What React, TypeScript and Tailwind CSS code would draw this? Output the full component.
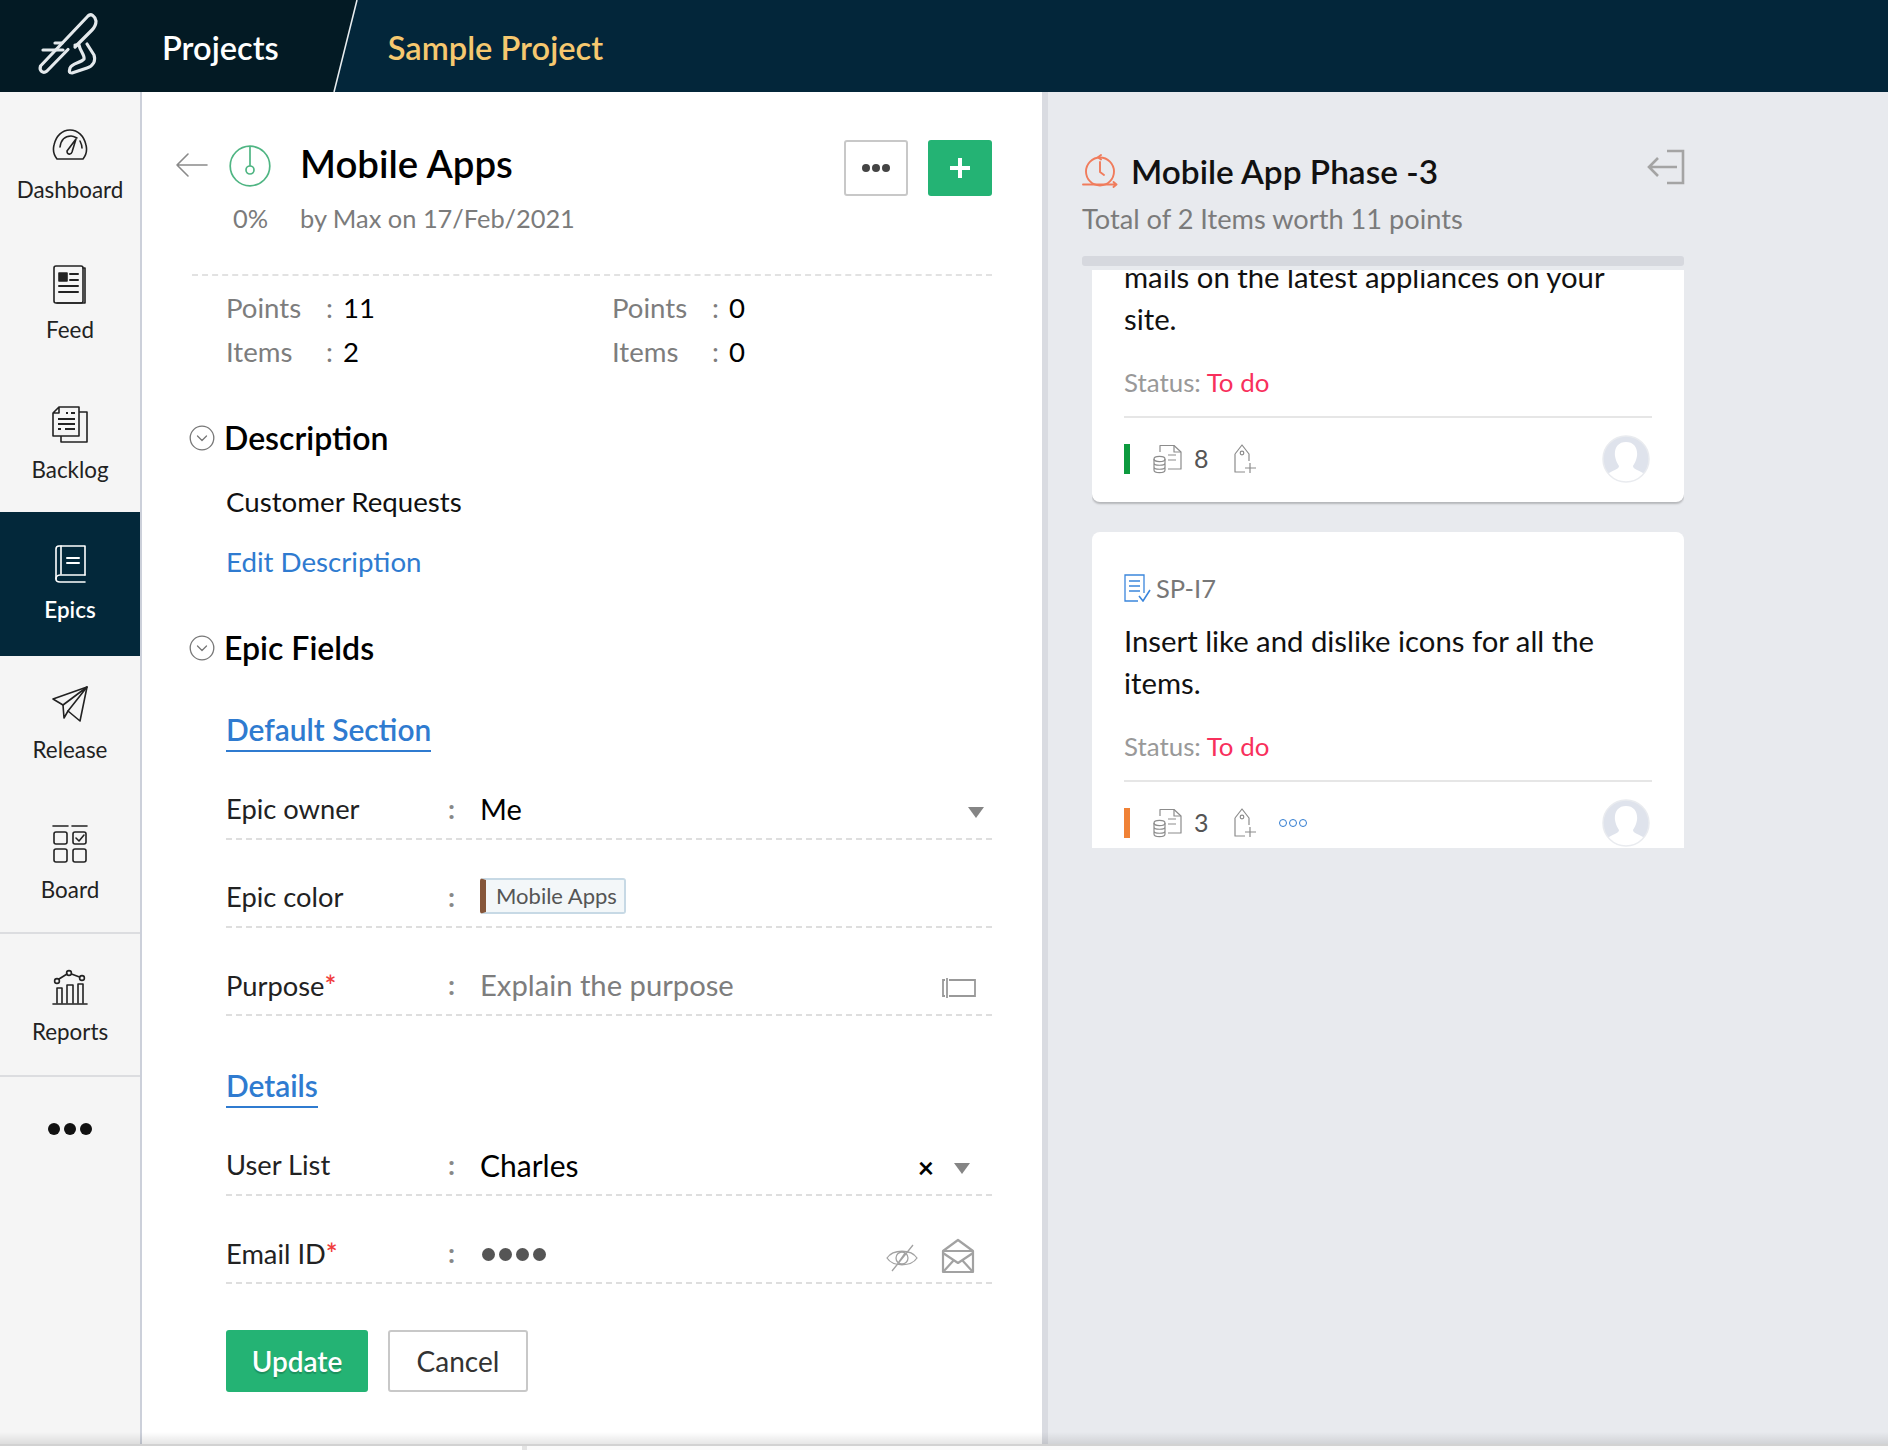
import React from "react";

const S = ({ w, h, vb, children, className = "" }: { w: number; h: number; vb: string; children: React.ReactNode; className?: string }) => (
  <svg width={w} height={h} viewBox={vb} fill="none" stroke="currentColor" strokeWidth={1.6} strokeLinecap="round" strokeLinejoin="round" className={className}>
    {children}
  </svg>
);

const Logo = () => (
  <svg width="90" height="80" viewBox="0 0 90 80" fill="none" stroke="#e4e9ec" strokeWidth="3.2" strokeLinejoin="round" strokeLinecap="round">
    <path d="M43 44.5 L22 66 C18 69 14 66 15.5 61 L63 11 C66 8 70 11 71 16 C71 20 69 23 67 25 L50 42" />
    <path d="M18 45 H38 M30 38 H37" />
    <path d="M50 40 H54 C55 46 60 50 59 54 C56 58 47 58 45 63 C44 67 44 68 47 68 L62 63 C68 61 71 56 69 50 L62 39" />
  </svg>
);

const Dashboard = () => (
  <S w={36} h={36} vb="0 0 36 36" className="text-[#222]">
    <path d="M5 31 C1 26 1 21 2 17 C4 8 10 2 18 2 C26 2 32 8 34 17 C35 21 35 26 31 31 Z" />
    <path d="M8 19 C9 12 13 8 19 8 C21 8 23 9 25 10" />
    <path d="M28 13 C29 15 30 17 30 20" />
    <path d="M24 11 L20 24 C19 27 15 27 15 23 Z" />
  </S>
);
const Feed = () => (
  <S w={34} h={40} vb="0 0 34 40" className="text-[#222]">
    <path d="M30 3 H32 V38 H4" />
    <rect x="1" y="1" width="29" height="37" rx="2" />
    <rect x="6" y="8" width="8" height="8" fill="currentColor" />
    <path d="M17 9 H25 M17 15 H25 M6 21 H25 M6 27 H25" strokeWidth="2" />
  </S>
);
const Backlog = () => (
  <svg width="36" height="37" viewBox="22 16 36 37" fill="none" stroke="#222" strokeWidth="1.6" strokeLinejoin="round">
    <path d="M29 17 H49 V46 H23 V23 Z M29 17 V23 H23" />
    <path d="M49 22 H57 V52 H31 V46" />
    <path d="M36 23 H38 M41 23 H45 M28 29 H45 M28 34 H45 M28 39 H31 M35 39 H45" strokeWidth="1.8" />
  </svg>
);
const Epics = () => (
  <S w={32} h={38} vb="0 0 32 38" className="text-white">
    <path d="M31 30 H6 C3 30 2 32 2 34 C2 36 3 37 6 37 H31" />
    <path d="M2 34 V4 C2 2 3 1 5 1 H31 V30" />
    <path d="M7 1 V29" />
    <path d="M13 13 H25 M13 18 H25" strokeWidth="2" />
  </S>
);
const Release = () => (
  <S w={36} h={36} vb="0 0 36 36" className="text-[#222]">
    <path d="M1 13 L35 1 L28 35 L16 25 L12 32 L11 19 Z" />
    <path d="M35 1 L11 19 M35 1 L16 25" />
  </S>
);
const Board = () => (
  <S w={36} h={38} vb="0 0 36 38" className="text-[#222]">
    <path d="M1 1 H16 M20 1 H35" />
    <rect x="2" y="7" width="13" height="12" rx="2" />
    <rect x="21" y="7" width="13" height="12" rx="2" />
    <rect x="2" y="24" width="13" height="13" rx="2" />
    <rect x="21" y="24" width="13" height="13" rx="2" />
    <path d="M24 13 L27 16 L32 10" />
  </S>
);
const Reports = () => (
  <S w={36} h={36} vb="0 0 36 36" className="text-[#222]">
    <path d="M1 35 H35" />
    <path d="M5 34 V19 H10 V34 M15 34 V16 H21 V34 M26 34 V15 H31 V34" />
    <circle cx="5" cy="12" r="2.4" />
    <circle cx="17" cy="4" r="2.4" />
    <circle cx="30" cy="9" r="2.4" />
    <path d="M7 10 L15 5 M19.5 5 L27.5 8" />
  </S>
);

const navItem = "flex flex-col items-center w-[140px] text-[22.4px] leading-[28px] text-[#222]";

const Sidebar = () => (
  <aside className="w-[142px] shrink-0 h-full bg-[#f5f5f5] border-r-2 border-[#ccd0da]">
    <div className={`${navItem} h-[140px] pt-[35px]`}>
      <div className="h-[38px] flex items-center"><Dashboard /></div>
      <span className="mt-[11px]">Dashboard</span>
    </div>
    <div className={`${navItem} h-[140px] pt-[33px]`}>
      <div className="h-[40px] flex items-center"><Feed /></div>
      <span className="mt-[11px]">Feed</span>
    </div>
    <div className={`${navItem} h-[140px] pt-[32px]`}>
      <div className="h-[40px] flex items-center"><Backlog /></div>
      <span className="mt-[12px]">Backlog</span>
    </div>
    <div className={`${navItem} h-[144px] pt-[32px] bg-[#03283a]`}>
      <div className="h-[40px] flex items-center"><Epics /></div>
      <span className="mt-[12px] font-semibold text-white">Epics</span>
    </div>
    <div className={`${navItem} h-[136px] pt-[29px]`}>
      <div className="h-[38px] flex items-center"><Release /></div>
      <span className="mt-[13px]">Release</span>
    </div>
    <div className={`${navItem} h-[142px] pt-[33px] border-b-2 border-[#dcdde0]`}>
      <div className="h-[38px] flex items-center"><Board /></div>
      <span className="mt-[13px]">Board</span>
    </div>
    <div className={`${navItem} h-[143px] pt-[34px] border-b-2 border-[#dcdde0]`}>
      <div className="h-[38px] flex items-center"><Reports /></div>
      <span className="mt-[12px]">Reports</span>
    </div>
    <div className="w-[140px] flex justify-center gap-[4px] pt-[46px]">
      <i className="w-[12px] h-[12px] rounded-full bg-[#111]" />
      <i className="w-[12px] h-[12px] rounded-full bg-[#111]" />
      <i className="w-[12px] h-[12px] rounded-full bg-[#111]" />
    </div>
  </aside>
);

const Chevron = () => (
  <svg width="26" height="26" viewBox="0 0 26 26" fill="none" stroke="#777" strokeWidth="1.3" strokeLinecap="round" strokeLinejoin="round">
    <circle cx="13" cy="13" r="11.8" />
    <path d="M8.5 11 L13 15.5 L17.5 11" />
  </svg>
);

const Caret = ({ className = "" }: { className?: string }) => (
  <svg width="16" height="11" viewBox="0 0 16 11" className={className}><path d="M0 0 H16 L8 11 Z" fill="#858585" /></svg>
);

const Row = ({ label, star, children }: { label: string; star?: boolean; children: React.ReactNode }) => (
  <div className="h-[88px] pt-[38px] border-b-2 border-dashed border-[#dedede] flex items-start text-[27.3px] leading-[38px]">
    <div className="w-[222px] shrink-0 text-[#222]">
      {label}
      {star && <span className="text-[#f03c3c] text-[28px] font-semibold">*</span>}
    </div>
    <div className="w-[32px] shrink-0 text-[#888] font-bold">:</div>
    <div className="flex-1 flex items-center h-[38px] relative">{children}</div>
  </div>
);

const SectionLink = ({ children }: { children: React.ReactNode }) => (
  <div className="inline-block h-[43px] leading-[40px] text-[29.9px] font-semibold text-[#2f7bd0] border-b-2 border-[#2f7bd0]">{children}</div>
);

const Main = () => (
  <main className="w-[900px] shrink-0 h-full bg-white pl-[33px] pr-[50px] pt-[48px]">
    <div className="flex items-start h-[56px] relative">
      <S w={34} h={26} vb="0 0 34 26" className="text-[#8a8a8a] mt-[12px]">
        <path d="M13 2 L2 13 L13 24 M2 13 H32" />
      </S>
      <svg width="42" height="42" viewBox="0 0 42 42" fill="none" stroke="#4fb583" strokeWidth="1.7" className="ml-[20px] mt-[5px]">
        <circle cx="21" cy="21" r="19.8" />
        <circle cx="21" cy="25" r="4" />
        <path d="M21 1 V21" />
      </svg>
      <h1 className="ml-[29px] text-[38.4px] leading-[46px] font-semibold text-black">Mobile Apps</h1>
      <div className="ml-auto flex gap-[20px]">
        <div className="w-[64px] h-[56px] rounded-[3px] border-2 border-[#c8c8c8] bg-white flex items-center justify-center gap-[2px]">
          <i className="w-[8px] h-[8px] rounded-full bg-[#444]" />
          <i className="w-[8px] h-[8px] rounded-full bg-[#444]" />
          <i className="w-[8px] h-[8px] rounded-full bg-[#444]" />
        </div>
        <div className="w-[64px] h-[56px] rounded-[3px] bg-[#24b374] flex items-center justify-center">
          <svg width="24" height="24" viewBox="0 0 24 24" stroke="#fff" strokeWidth="4"><path d="M12 2 V22 M2 12 H22" /></svg>
        </div>
      </div>
    </div>
    <div className="flex h-[44px] items-center text-[25.4px] text-[#7b7b7b]">
      <span className="w-[125px] pl-[58px]">0%</span>
      <span>by Max on 17/Feb/2021</span>
    </div>
    <div className="ml-[17px] mt-[34px] border-b-2 border-dashed border-[#e2e2e2]" />
    <div className="ml-[51px] mt-[10px] grid grid-cols-[386px_1fr] text-[27.6px] leading-[44px]">
      {[["Points", "11"], ["Points", "0"], ["Items", "2"], ["Items", "0"]].map(([k, v], i) => (
        <div key={i} className="flex">
          <span className="w-[100px] text-[#7d7d7d]">{k}</span>
          <span className="w-[17px] text-[#7d7d7d]">:</span>
          <span className="text-black">{v}</span>
        </div>
      ))}
    </div>
    <div className="flex items-center h-[40px] mt-[44px] ml-[14px] gap-[9px] text-[32px] font-semibold text-black">
      <Chevron />
      Description
    </div>
    <div className="ml-[51px] mt-[24px] h-[40px] leading-[40px] text-[27.7px] text-[#111]">Customer Requests</div>
    <div className="ml-[51px] mt-[20px] h-[40px] leading-[40px] text-[27.7px] text-[#2f7bd0]">Edit Description</div>
    <div className="flex items-center h-[40px] mt-[46px] ml-[14px] gap-[9px] text-[32px] font-semibold text-black">
      <Chevron />
      Epic Fields
    </div>
    <div className="ml-[51px]">
      <div className="mt-[41px]"><SectionLink>Default Section</SectionLink></div>
      <Row label="Epic owner">
        <span className="text-[29px] text-black">Me</span>
        <Caret className="absolute right-[8px] top-[17px]" />
      </Row>
      <Row label="Epic color">
        <div className="relative -top-[1px] flex items-center h-[36px] pl-[10px] pr-[7px] text-[22px] text-[#555] bg-[#f3f7f9] border-2 border-[#c7d9e5] rounded-[3px] border-l-[6px] border-l-[#85563a]">Mobile Apps</div>
      </Row>
      <Row label="Purpose" star>
        <span className="text-[29.2px] text-[#7d7d7d]">Explain the purpose</span>
        <svg width="34" height="22" viewBox="0 0 34 22" fill="none" stroke="#999" strokeWidth="1.8" className="absolute right-[16px] top-[11px]">
          <path d="M7 3 H33 V19 H7 M3 3 H1 V19 H3" />
          <path d="M5 1 V21" />
        </svg>
      </Row>
      <div className="mt-[49px]"><SectionLink>Details</SectionLink></div>
      <Row label="User List">
        <span className="text-[30px] text-black">Charles</span>
        <span className="absolute right-[58px] top-[2px] text-[28px] font-bold text-black">×</span>
        <Caret className="absolute right-[22px] top-[17px]" />
      </Row>
      <Row label="Email ID" star>
        <div className="flex gap-[4px] pl-[2px] relative top-[1px]">
          <i className="w-[13px] h-[13px] rounded-full bg-[#555]" />
          <i className="w-[13px] h-[13px] rounded-full bg-[#555]" />
          <i className="w-[13px] h-[13px] rounded-full bg-[#555]" />
          <i className="w-[13px] h-[13px] rounded-full bg-[#555]" />
        </div>
        <svg width="34" height="28" viewBox="0 0 34 28" fill="none" stroke="#a2a2a2" strokeWidth="1.3" className="absolute right-[73px] top-[10px]">
          <path d="M2 14 C8 5 26 5 32 14 C26 23 8 23 2 14 Z" />
          <circle cx="17" cy="14" r="6" />
          <path d="M28 1 L7 27 M20 9 L13 19" />
        </svg>
        <svg width="34" height="36" viewBox="0 0 34 36" fill="none" stroke="#a2a2a2" strokeWidth="2.2" strokeLinejoin="round" className="absolute right-[17px] top-[4px]">
          <path d="M2 13 L17 2 L32 13 V34 H2 Z" />
          <path d="M2 13 H32 M2 15 L17 25 L32 15 M2 34 L13 22 M32 34 L21 22" />
        </svg>
      </Row>
      <div className="mt-[46px] flex gap-[20px]">
        <div className="w-[142px] h-[62px] rounded-[3px] bg-[#24b374] text-white text-[28px] font-semibold flex items-center justify-center [text-shadow:0_2px_1px_rgba(0,0,0,0.2)]">Update</div>
        <div className="w-[140px] h-[62px] rounded-[3px] border-2 border-[#c8c8c8] bg-white text-[#333] text-[28px] flex items-center justify-center">Cancel</div>
      </div>
    </div>
  </main>
);

const FileDb = () => (
  <svg width="30" height="30" viewBox="0 0 30 30" fill="none" stroke="#8c8c8c" strokeWidth="1.2" strokeLinejoin="round">
    <path d="M7 8 V1.5 H21 L28 8 V25 H15" />
    <path d="M21 1.5 V8 H28 M15 11 H23 M15 16 H23" />
    <ellipse cx="6.5" cy="15" rx="5.5" ry="2.6" />
    <path d="M1 15 V26 C1 29.5 12 29.5 12 26 V15 M1 19 C1 22 12 22 12 19 M1 23 C1 26 12 26 12 23" />
  </svg>
);
const TagPlus = () => (
  <svg width="24" height="30" viewBox="0 0 24 30" fill="none" stroke="#8c8c8c" strokeWidth="1.2" strokeLinejoin="round">
    <path d="M2 10 L9 1 L16 10 V17 M2 10 V28 H12" />
    <circle cx="9" cy="9" r="1.8" />
    <path d="M17 19 V29 M12 24 H23" />
  </svg>
);
const Avatar = () => (
  <svg width="48" height="48" viewBox="0 0 48 48" className="ml-auto mr-[2px]">
    <defs>
      <clipPath id="av"><circle cx="24" cy="24" r="23" /></clipPath>
    </defs>
    <circle cx="24" cy="24" r="23" fill="#dfe3ec" />
    <g clipPath="url(#av)" fill="#fff">
      <path d="M24 7 C32 7 36 13 35 21 C34 27 32 29 31 31 C31 34 36 35 41 38 L46 48 H2 L7 38 C12 35 17 34 17 31 C16 29 14 27 13 21 C12 13 16 7 24 7 Z" />
    </g>
    <circle cx="24" cy="24" r="23" fill="none" stroke="#e9ebef" strokeWidth="1.5" />
  </svg>
);

const Footer = ({ bar, n, more }: { bar: string; n: string; more?: boolean }) => (
  <div className="flex items-center h-[48px] mt-[17px]">
    <i className={`w-[6px] h-[30px] ${bar}`} />
    <span className="ml-[23px]"><FileDb /></span>
    <span className="ml-[11px] w-[39px] text-[25px] text-[#555]">{n}</span>
    <TagPlus />
    {more && (
      <span className="ml-[22px] flex gap-[2px]">
        <i className="w-[8px] h-[8px] rounded-full border-[1.5px] border-[#2f7bd0]" />
        <i className="w-[8px] h-[8px] rounded-full border-[1.5px] border-[#2f7bd0]" />
        <i className="w-[8px] h-[8px] rounded-full border-[1.5px] border-[#2f7bd0]" />
      </span>
    )}
    <Avatar />
  </div>
);

const Status = () => (
  <div className="h-[40px] leading-[40px] text-[25.9px] text-[#999]">
    Status: <span className="text-[#f8305c]">To do</span>
  </div>
);

const Panel = () => (
  <section className="flex-1 h-full bg-[#e8eaee] border-l-[6px] border-[#d9dbe1] pl-[34px] pt-[57px]">
    <div className="w-[602px]">
      <div className="flex items-center h-[44px] relative">
        <svg width="36" height="34" viewBox="12 12 36 34" fill="none" stroke="#f07c5c" strokeWidth="1.9" strokeLinecap="round" strokeLinejoin="round">
          <circle cx="30" cy="29.5" r="14" />
          <path d="M30 20 V30 L34 33" />
          <path d="M13 42.5 H46 M43.5 40 L46.5 42.5 L43.5 45" />
          <path d="M31 13 L28 15.2 L31 17.5" />
        </svg>
        <h2 className="ml-[13px] text-[33.4px] font-semibold text-[#111]">Mobile App Phase -3</h2>
        <svg width="38" height="36" viewBox="0 0 38 36" fill="none" stroke="#a4a4a4" strokeWidth="2.6" className="absolute right-[-1px] top-[0px]">
          <path d="M20 2 H36 V34 H20 M30 18 H3 M11 9 L2 18 L11 27" />
        </svg>
      </div>
      <div className="h-[36px] mt-[8px] leading-[36px] text-[27.2px] text-[#7b7b7b]">Total of 2 Items worth 11 points</div>
      <div className="h-[10px] mt-[19px] rounded-[3px] bg-[#d6d8de]" />
      <div className="mt-[4px] ml-[10px] h-[578px] overflow-hidden">
        <div className="-mt-[14px] bg-white rounded-[8px] shadow-[0_2px_2px_rgba(0,0,0,0.22)] px-[32px] h-[246px]">
          <p className="text-[29.3px] leading-[42px] text-[#111]">mails on the latest appliances on your site.</p>
          <div className="mt-[22px]"><Status /></div>
          <div className="mt-[14px] border-b-2 border-[#e6e6e6]" />
          <Footer bar="bg-[#0d9a3e]" n="8" />
        </div>
        <div className="mt-[30px] bg-white rounded-t-[8px] px-[32px] pt-[36px] h-[400px]">
          <div className="flex items-center h-[40px]">
            <svg width="27" height="28" viewBox="0 0 27 28" fill="none" stroke="#3b86dc" strokeWidth="1.3">
              <path d="M20 19 V1 H1 V27 H14" />
              <path d="M5 7 H16 M5 12 H16 M5 17 H16" />
              <path d="M15 22 L19 27 L26 16" strokeWidth="1.6" />
            </svg>
            <span className="ml-[5px] text-[25.5px] text-[#777]">SP-I7</span>
          </div>
          <p className="mt-[12px] text-[29.3px] leading-[42px] text-[#111]">Insert like and dislike icons for all the items.</p>
          <div className="mt-[22px]"><Status /></div>
          <div className="mt-[14px] border-b-2 border-[#e6e6e6]" />
          <Footer bar="bg-[#f08236]" n="3" more />
        </div>
      </div>
    </div>
  </section>
);

export default function App() {
  return (
    <div className="w-[1888px] h-[1450px] overflow-hidden flex flex-col bg-white [font-family:Lato,'Liberation_Sans',sans-serif]">
      <header className="relative h-[92px] shrink-0 bg-[#03263a] flex items-center">
        <div className="absolute inset-y-0 left-0 w-[357px] bg-[#031a24] [clip-path:polygon(0_0,100%_0,334px_100%,0_100%)]" />
        <svg width="30" height="92" viewBox="0 0 30 92" className="absolute left-[331px] top-0"><path d="M26 0 L3 92" stroke="#e8edf0" strokeWidth="1.6" /></svg>
        <div className="relative ml-[25px] w-[137px] -mt-[2px]"><Logo /></div>
        <span className="relative text-[32.6px] font-semibold text-white mt-[4px]">Projects</span>
        <span className="relative ml-[109px] text-[32.6px] font-semibold text-[#f6c86f] mt-[4px]">Sample Project</span>
      </header>
      <div className="relative flex h-[1352px] shrink-0">
        <Sidebar />
        <Main />
        <Panel />
        <div className="absolute inset-x-0 bottom-0 h-[12px] bg-gradient-to-b from-transparent to-black/10" />
      </div>
      <div className="h-[6px] shrink-0 bg-white border-t-2 border-[#d2d2d2] flex">
        <div className="w-[522px] h-full bg-white" />
        <div className="flex-1 h-full bg-[#fafafa] border-l-[5px] border-[#e4e4e4]" />
      </div>
    </div>
  );
}
